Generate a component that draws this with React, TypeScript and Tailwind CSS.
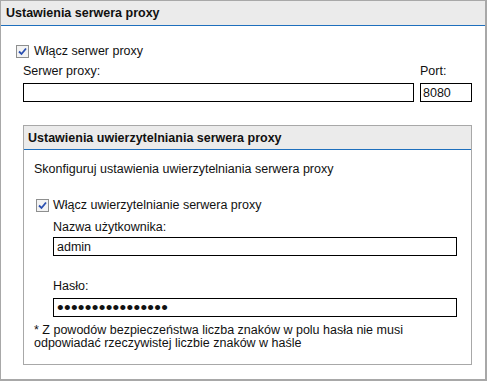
import React, { useState } from "react";

const Checkbox = ({ checked, onToggle }: { checked: boolean; onToggle: () => void }) => (
  <span
    onClick={onToggle}
    className="flex h-[13px] w-[13px] shrink-0 cursor-pointer items-center justify-center border border-[#8e8f8f] bg-[#f3f3f3]"
  >
    {checked && (
      <svg width="9" height="9" viewBox="0 0 9 9">
        <path d="M1 4.5 L3.5 7 L8 1.5" fill="none" stroke="#2a4fb0" strokeWidth="1.8" />
      </svg>
    )}
  </span>
);

export default function App() {
  const [proxyOn, setProxyOn] = useState(true);
  const [authOn, setAuthOn] = useState(true);

  return (
    <div
      className="h-[381px] w-[487px] border border-r-2 border-b-2 border-[#a8a8a8] bg-white text-[12.5px] leading-[14px] text-[#111]"
      style={{ fontFamily: '"Liberation Sans", Arial, sans-serif' }}
    >
      {/* Header */}
      <div className="flex h-[25px] items-center border-b border-[#1e6fbd] bg-[#ebebeb] px-[5px] font-bold">
        Ustawienia serwera proxy
      </div>

      <div className="pl-[22px] pr-[13px]">
        <div className="mt-[17px] ml-[-7px] flex h-[16px] items-center gap-[5px]">
          <Checkbox checked={proxyOn} onToggle={() => setProxyOn(!proxyOn)} />
          <span>Włącz serwer proxy</span>
        </div>

        <div className="mt-[5px] flex gap-[6px]">
          <div className="flex flex-1 flex-col">
            <label>Serwer proxy:</label>
            <input className="mt-[5px] h-[19px] border border-black px-[3px] outline-none" />
          </div>
          <div className="flex w-[52px] flex-col">
            <label>Port:</label>
            <input
              defaultValue="8080"
              className="mt-[5px] h-[19px] w-full border border-black px-[2px] outline-none"
            />
          </div>
        </div>

        {/* Auth box */}
        <div className="mt-[23px] h-[240px] border border-[#a8a8a8]">
          <div className="flex h-[24px] items-center border-b border-[#1e6fbd] bg-[#ebebeb] px-[4px] font-bold">
            Ustawienia uwierzytelniania serwera proxy
          </div>
          <div className="px-[10px]">
            <div className="mt-[12px]">Skonfiguruj ustawienia uwierzytelniania serwera proxy</div>

            <div className="mt-[21px] ml-[2px] flex h-[16px] items-center gap-[4px]">
              <Checkbox checked={authOn} onToggle={() => setAuthOn(!authOn)} />
              <span>Włącz uwierzytelnianie serwera proxy</span>
            </div>

            <div className="ml-[19px] mr-[4px] flex flex-col">
              <label className="mt-[7px]">Nazwa użytkownika:</label>
              <input
                defaultValue="admin"
                className="mt-[3px] h-[19px] border border-black px-[3px] outline-none"
              />
              <label className="mt-[23px]">Hasło:</label>
              <input
                type="password"
                defaultValue="aaaaaaaaaaaaaaaa"
                className="mt-[5px] h-[19px] border border-black px-[3px] py-0 text-[19px] leading-none tracking-[0.3px] outline-none"
              />
            </div>
            <p className="mt-[7px] leading-[13px]">
              * Z powodów bezpieczeństwa liczba znaków w polu hasła nie musi
              <br />
              odpowiadać rzeczywistej liczbie znaków w haśle
            </p>
          </div>
        </div>
      </div>
    </div>
  );
}
